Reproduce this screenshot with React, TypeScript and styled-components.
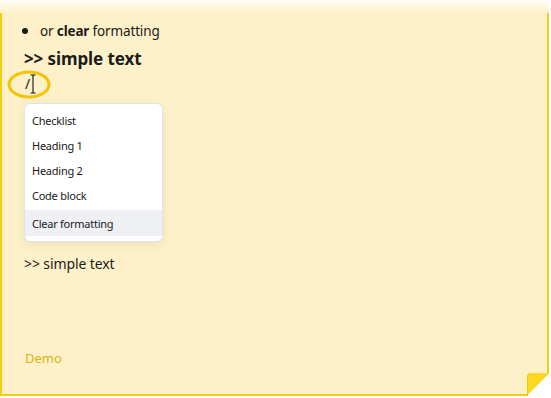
import * as React from 'react'
import styled, { createGlobalStyle } from 'styled-components'

const GlobalStyle = createGlobalStyle`
  html, body {
    margin: 0;
    padding: 0;
    background: #ffffff;
  }
  body {
    font-family: 'Noto Sans', 'Open Sans', sans-serif;
    color: #1c1c1c;
  }
`

const SPage = styled.div`
  width: 551px;
  height: 398px;
  background: #ffffff;
  overflow: hidden;
`

const SFade = styled.div`
  width: 549px;
  height: 13px;
  background: linear-gradient(to bottom, #fffdf8 0%, #fef1c9 100%);
`

const SNote = styled.div`
  position: relative;
  box-sizing: border-box;
  width: 549px;
  height: 383px;
  background: #fef1c9;
  border-left: 2px solid #f2cd12;
  border-right: 2px solid #f2cd12;
  border-bottom: 2px solid #f2cd12;
  padding: 7px 0 0 22px;
  display: flex;
  flex-direction: column;
  align-items: flex-start;
`

const SFold = styled.div`
  position: absolute;
  right: -2px;
  bottom: -2px;
  width: 22px;
  height: 23px;
  border-top-left-radius: 4px;
  background: linear-gradient(to bottom right, #fdd823 50%, #ffffff 50%);
  box-shadow: inset 1px 0 0 #f0c800;
`

const SBullet = styled.ul`
  margin: 0;
  padding: 0 0 0 16px;
  font-size: 13.5px;
  letter-spacing: -0.15px;
  line-height: 20px;
  li::marker {
    font-size: 16px;
  }
`

const SHeading = styled.div`
  margin-top: 6px;
  font-size: 17px;
  font-weight: 700;
  line-height: 24px;
  letter-spacing: -0.1px;
`

const SSlashLine = styled.div`
  position: relative;
  margin-top: 2px;
  font-size: 14px;
  line-height: 22px;
  height: 22px;
  padding-left: 1px;
`

const SRing = styled.svg`
  position: absolute;
  left: -16px;
  top: -3px;
  overflow: visible;
`

const SMenu = styled.div`
  margin-top: 8px;
  width: 139px;
  box-sizing: border-box;
  background: #ffffff;
  border: 1px solid #dbe3ee;
  border-radius: 6px;
  box-shadow: 0 3px 10px rgba(120, 100, 40, 0.12);
  padding: 4px 0 5px;
  display: flex;
  flex-direction: column;
`

const SMenuItem = styled.div<{ active?: boolean }>`
  height: ${({ active }) => (active ? '26px' : '25px')};
  margin-top: ${({ active }) => (active ? '2px' : '0')};
  display: flex;
  align-items: center;
  padding-left: 7px;
  font-size: 11px;
  letter-spacing: -0.25px;
  color: #202020;
  background: ${({ active }) => (active ? '#eef0f4' : 'transparent')};
`

const SPlain = styled.div`
  margin-top: 12px;
  font-size: 14px;
  line-height: 20px;
  letter-spacing: -0.1px;
`

const SDemo = styled.div`
  margin-top: 75px;
  margin-left: 1px;
  font-size: 13px;
  line-height: 18px;
  color: #d8b413;
`

const items = ['Checklist', 'Heading 1', 'Heading 2', 'Code block', 'Clear formatting']

function App() {
  return (
    <SPage>
      <GlobalStyle />
      <SFade />
      <SNote>
        <SBullet>
          <li>
            or <b>clear</b> formatting
          </li>
        </SBullet>
        <SHeading>{'>> simple text'}</SHeading>
        <SSlashLine>
          /
          <SRing width="44" height="30" viewBox="0 0 44 30">
            <ellipse cx="21" cy="14.5" rx="20" ry="12.5" fill="none" stroke="#f5c400" strokeWidth="3" />
            <path d="M22.5 5h5M25 5v18M22.5 23h5" stroke="#111" strokeWidth="1.1" fill="none" />
          </SRing>
        </SSlashLine>
        <SMenu>
          {items.map((item, i) => (
            <SMenuItem key={item} active={i === items.length - 1}>
              {item}
            </SMenuItem>
          ))}
        </SMenu>
        <SPlain>{'>> simple text'}</SPlain>
        <SDemo>Demo</SDemo>
        <SFold />
      </SNote>
    </SPage>
  )
}

export default App
